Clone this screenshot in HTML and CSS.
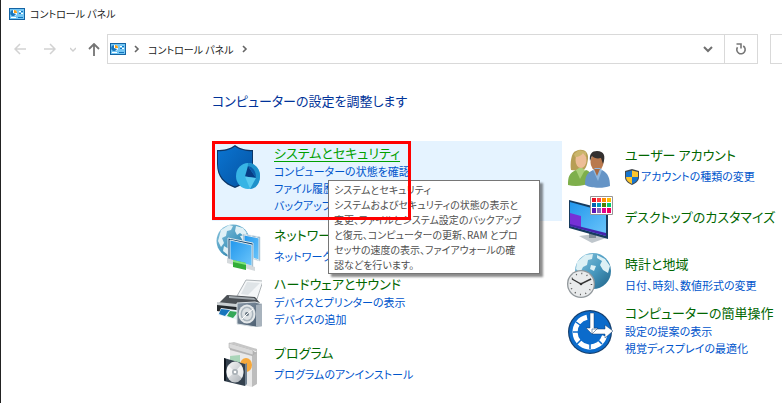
FILE: index.html
```html
<!DOCTYPE html>
<html lang="ja">
<head>
<meta charset="utf-8">
<title>コントロール パネル</title>
<link rel="stylesheet" href="styles.css">
</head>
<body>
<svg class="defs" aria-hidden="true">
  <defs>
    <linearGradient id="globe" x1="0" y1="0" x2="1" y2="1"><stop offset="0" stop-color="#8ec6de"/><stop offset=".5" stop-color="#4b9cc2"/><stop offset="1" stop-color="#1f6287"/></linearGradient>
    <linearGradient id="screen" x1="0" y1="0" x2="1" y2="1"><stop offset="0" stop-color="#2196ec"/><stop offset="1" stop-color="#6cc6fb"/></linearGradient>
    <linearGradient id="shield" x1="0" y1="0" x2="1" y2="1"><stop offset="0" stop-color="#0a74d1"/><stop offset="1" stop-color="#0553a2"/></linearGradient>
    <linearGradient id="silver" x1="0" y1="0" x2="1" y2="1"><stop offset="0" stop-color="#fafafa"/><stop offset="1" stop-color="#a9afb5"/></linearGradient>
    <linearGradient id="slate" x1="0" y1="0" x2="1" y2="1"><stop offset="0" stop-color="#8796a5"/><stop offset="1" stop-color="#46596c"/></linearGradient>
    <symbol id="panel" viewBox="0 0 16 12">
      <path fill="#1464a4" d="M0 0h16v12H0z"/><path fill="#74c7f5" d="M1 1h14v10H1z"/>
      <circle cx="5" cy="5" r="3" fill="#fff"/><path fill="#1676be" d="M4 5V2a3 3 0 1 0 3 4z"/><path fill="#f5a01b" d="M5 5V2a3 3 0 0 1 3 3z"/>
      <path fill="#fff" d="M10 3h4v1h-4zM10 5h4v1h-4zM2 9h5v1H2z"/><path fill="#1676be" d="M12 3h2v1h-2zM10 5h2v1h-2zM9 9h5v1H9z"/>
    </symbol>
    <symbol id="chevron" viewBox="0 0 6 8"><path d="M1 1l3 3-3 3" fill="none" stroke="#666" stroke-width="1.6"/></symbol>
  </defs>
</svg>
<div class="window">
  <header class="titlebar">
    <svg class="panel-icon"><use href="#panel"/></svg>
    <span>コントロール パネル</span>
  </header>
  <nav class="toolbar">
    <button class="nav back" aria-label="戻る"><svg width="12" height="12" viewBox="0 0 12 12"><path d="M12 6H1M6 1L1 6l5 5" fill="none" stroke="#d2d2d2" stroke-width="1.5"/></svg></button>
    <button class="nav forward" aria-label="進む"><svg width="12" height="12" viewBox="0 0 12 12"><path d="M0 6h11M6 1l5 5-5 5" fill="none" stroke="#d2d2d2" stroke-width="1.5"/></svg></button>
    <button class="nav recent" aria-label="最近表示した場所"><svg width="6" height="5" viewBox="0 0 6 5"><path d="M0 1l3 3 3-3" fill="none" stroke="#cfcfcf" stroke-width="1.4"/></svg></button>
    <button class="nav up" aria-label="上へ"><svg width="12" height="13" viewBox="0 0 12 13"><path d="M6 13V1M1 6l5-5 5 5" fill="none" stroke="#747474" stroke-width="1.8"/></svg></button>
    <div class="address">
      <svg class="panel-icon"><use href="#panel"/></svg>
      <svg class="chevron"><use href="#chevron"/></svg>
      <a href="#">コントロール パネル</a>
      <svg class="chevron"><use href="#chevron"/></svg>
      <button class="history" aria-label="履歴"><svg width="10" height="7" viewBox="0 0 10 7"><path d="M1 1l4 4 4-4" fill="none" stroke="#707070" stroke-width="2"/></svg></button>
      <button class="refresh" aria-label="最新の情報に更新"><svg width="12" height="12" viewBox="0 0 12 12"><path d="M8.200 3A4.200 4.200 0 1 1 2.500 4.200M1.500 1H6v4.500" fill="none" stroke="#777" stroke-width="1.6"/></svg></button>
    </div>
    <input class="search" type="text" aria-label="検索">
  </nav>
  <main>
    <h1>コンピューターの設定を調整します</h1>
    <div class="columns">
      <div class="column left">
        <section class="item active">
          <svg class="icon" viewBox="0 0 46 48">
            <path d="M19 0c5 4 11 5 18 5v14c0 13-7 20-18 24C8 39 1 32 1 19V5c7 0 13-1 18-5z" fill="#0b3566"/>
            <path d="M19 1.500c5 3.500 10 4.500 17 4.800V19c0 12-7 18.500-17 22.500C9 38 2 31 2 19V6.300c7 0 12-1.300 17-4.800z" fill="url(#shield)"/>
            <ellipse cx="32" cy="31" rx="12" ry="13" fill="#37b4e5"/>
            <path d="M32 18c7 0 12 6 12 13s-4 13-10 13l-3-10z" fill="#1e91cb"/>
            <path d="M32 21l8 12-11-1.500z" fill="#073c84"/><path d="M32 21c5 1 8 5 8 12z" fill="#0b5aa9"/>
            <path d="M29 31.500L40 33l-6 11z" fill="#58c9ef"/>
          </svg>
          <div class="text">
            <h2><a href="#">システムとセキュリティ</a></h2>
            <a class="task" href="#">コンピューターの状態を確認</a>
            <a class="task" href="#">ファイル履歴</a>
            <a class="task" href="#">バックアップ</a>
          </div>
          <div class="tooltip" role="tooltip">システムとセキュリティ<br>システムおよびセキュリティの状態の表示と<br>変更、ファイルとシステム設定のバックアップ<br>と復元、コンピューターの更新、RAM とプロ<br>セッサの速度の表示、ファイアウォールの確<br>認などを行います。</div>
          <div class="marker"></div>
        </section>
        <section class="item spaced">
          <svg class="icon" viewBox="0 0 46 48">
            <circle cx="17" cy="18" r="16.500" fill="url(#globe)"/>
            <path d="M5 7l8-5 4 1-2 4-4 1-1 5-4 2 2 5-3 4-3-6zM20 3l7 2 4 5-3 3-4-3-3 2-2-4zM8 23l5 3-1 6-5-4zM24 13l5-1 3 5-5 1z" fill="#e0f1f7"/>
            <g stroke="#dce7ed" stroke-width="1"><path d="M27 11l17 3v24l-17-5z" fill="#17578c"/><path d="M28 12l15 3v22l-15-5z" fill="url(#screen)"/><path d="M12 15l25 5v26l-25-7z" fill="#174a74"/><path d="M14 17l22 5v21l-22-6z" fill="url(#screen)"/></g>
            <path d="M11 35l28 9v4l-28-8z" fill="#d5dadd"/><path d="M17 37l13 3v7l-13-3z" fill="#33ad38"/><path d="M17 37l13 3v2l-13-3z" fill="#81e47c"/>
          </svg>
          <div class="text">
            <h2><a href="#">ネットワーク</a></h2>
            <a class="task" href="#">ネットワークの</a>
          </div>
        </section>
        <section class="item">
          <svg class="icon" viewBox="0 0 46 48">
            <path d="M30 1l17 1-6 18-20-3z" fill="#f5f7f8" stroke="#aeb4b8"/><path d="M31 3l13 1-12 12-7-1z" fill="#dfe4e7"/>
            <path d="M11 16l28 2 5 6-15 5-28-3z" fill="#4b5055"/><path d="M13 17l25 2 2 2-27-2z" fill="#a4abb0"/><path d="M1 24l30 3v10L1 32z" fill="#252a2e"/><path d="M1 23l29 3v3L1 26z" fill="#c9ced1"/>
            <path d="M5 29l22 3-5 9-20-5z" fill="#eaf3fa"/><path d="M5 30l9 1-5 6-6-2z" fill="#1775bd"/><path d="M14 32l8 1-5 6-6-2z" fill="#35a85a"/>
            <path d="M21 24l18-1 7 2v22l-6 1-19-3z" fill="url(#slate)" stroke="#dae0e4"/><path d="M40 26l6-1v22l-6 1z" fill="#a8b3bd"/>
            <ellipse cx="31" cy="35" rx="8.500" ry="9.500" fill="#e4e8ea"/><ellipse cx="31" cy="35" rx="6.500" ry="7.500" fill="#a9b4bc"/><ellipse cx="31" cy="35" rx="5" ry="6" fill="#dce1e4"/><circle cx="31" cy="35" r="2" fill="#687783"/><path d="M31 35l6-5M31 35l-5 5" stroke="#fff"/>
          </svg>
          <div class="text">
            <h2><a href="#">ハードウェアとサウンド</a></h2>
            <a class="task" href="#">デバイスとプリンターの表示</a>
            <a class="task" href="#">デバイスの追加</a>
          </div>
        </section>
        <section class="item spaced">
          <svg class="icon" viewBox="0 0 46 48">
            <path d="M14 7l22 7v32l-22-5z" fill="#e9e9e9"/><path d="M36 14l5-4v33l-5 3z" fill="#bdbdbd"/>
            <path d="M13 2l23 7 5 3-5 3-22-6z" fill="#b5b5b5"/><path d="M13 2l24 7v5l-24-7z" fill="#dadada" stroke="#a7a7a7" stroke-width=".5"/><path d="M13 2l5-1 23 7v3l-4-2z" fill="#c6c6c6"/>
            <path d="M14 15l10-1v15l-10-3z" fill="#a9d5b8"/><ellipse cx="30" cy="24" rx="6" ry="7" fill="#f6a83b"/>
            <path d="M8 17l21 6v22L8 40z" fill="#34414e"/><path d="M8 17l2 1v22l-2-1z" fill="#111820"/><path d="M29 23l2-1v21l-2 2z" fill="#738291"/>
            <ellipse cx="19" cy="31" rx="8.500" ry="10.500" fill="url(#silver)"/><path d="M19 31l6-7c3 4 3 9 1 13zM19 31l-7 6c-2-4-2-9 0-13z" fill="#fff" opacity=".7"/><circle cx="19" cy="31" r="3" fill="#a9b0b6"/><circle cx="19" cy="31" r="1.300" fill="#fff"/>
          </svg>
          <div class="text">
            <h2><a href="#">プログラム</a></h2>
            <a class="task" href="#">プログラムのアンインストール</a>
          </div>
        </section>
      </div>
      <div class="column right">
        <section class="item spaced">
          <svg class="icon" viewBox="0 0 46 48">
            <path d="M4 27c-1-6 0-18 5-19 6-3 13 0 12 8-1 8-3 12-8 12z" fill="#b79e55"/><ellipse cx="14" cy="17" rx="5.500" ry="8" fill="#edbd97"/><path d="M8 14c4 0 7-2 8-4l3 4V9l-7-2-5 4z" fill="#cbb56b"/>
            <path d="M1 42c0-8 1-12 8-15l4 4 6-4c6 2 6 6 6 12-7 4-17 5-24 3z" fill="#7eaf4c"/><path d="M9 27l4 9 5-9-3-2h-3z" fill="#a9cf79"/>
            <ellipse cx="30" cy="19" rx="6.500" ry="9" fill="#b9794d"/><path d="M23 18c-1-7 2-10 7-10 7 0 9 5 6 13l-2-6c-4 1-7 0-9-2z" fill="#33302f"/>
            <path d="M18 42c0-9 2-12 8-15l4 4 5-4c6 3 8 8 8 16-7 3-20 2-25-1z" fill="#6594c6"/><path d="M26 27l5 11 4-11-2-2h-5z" fill="#90b8df"/><path d="M27 26h6l-3 7z" fill="#a86a43"/>
          </svg>
          <div class="text">
            <h2><a href="#">ユーザー アカウント</a></h2>
            <a class="task" href="#"><svg class="uac" viewBox="0 0 14 16"><path d="M7 0l7 2v6c0 4-3 6-7 8-4-2-7-4-7-8V2z" fill="#44494d"/><path d="M7 1.500V8H1V3z" fill="#1675ce"/><path d="M7 1.500V8h6V3z" fill="#fbc52d"/><path d="M1 8h6v7C3 13 1 11 1 8z" fill="#fbc52d"/><path d="M13 8H7v7c4-2 6-4 6-7z" fill="#1675ce"/></svg>アカウントの種類の変更</a>
          </div>
        </section>
        <section class="item">
          <svg class="icon" viewBox="0 0 46 48">
            <path d="M12 41l16-2 11 4-14 5z" fill="#bfc6cc"/><path d="M22 37h7v6h-7z" fill="#838f98"/>
            <path d="M2 5l39 10v29L2 33z" fill="#163b5e"/><path d="M3 7l36 10v24L3 31z" fill="url(#screen)"/><path d="M3 18l11 3v13L3 31z" fill="#7730d7"/><path d="M3 29l36 9v3L3 31z" fill="#4524ab"/>
            <path d="M23.500 1.500h22v18h-22z" fill="#fff" stroke="#969696"/>
            <path d="M25 3h4v4h-4z" fill="#e81123"/><path d="M30 3h4v4h-4z" fill="#ff4343"/><path d="M35 3h4v4h-4z" fill="#ff8c00"/><path d="M40 3h4v4h-4z" fill="#ffb900"/>
            <path d="M25 8h4v4h-4z" fill="#0063b1"/><path d="M30 8h4v4h-4z" fill="#0099bc"/><path d="M35 8h4v4h-4z" fill="#498205"/><path d="M40 8h4v4h-4z" fill="#00cc6a"/>
            <path d="M25 13h4v5h-4z" fill="#5b15b5"/><path d="M30 13h4v5h-4z" fill="#8764b8"/><path d="M35 13h4v5h-4z" fill="#e3008c"/><path d="M40 13h4v5h-4z" fill="#ea005e"/>
          </svg>
          <div class="text"><h2><a href="#">デスクトップのカスタマイズ</a></h2></div>
        </section>
        <section class="item spaced">
          <svg class="icon" viewBox="0 0 46 48">
            <circle cx="26" cy="19" r="18" fill="url(#globe)"/><path d="M10 10l8-7 8-1-1 5-4 1-1 5-4 2-3 6-4-4zM30 3l8 4 5 7-2 7-5-3-3-5 2-4-5-3zM24 13l5 1-2 5-4-2z" fill="#dcf0f5"/>
            <circle cx="14" cy="32" r="14" fill="#92989c"/><circle cx="14" cy="32" r="12.700" fill="#e9ebec"/><circle cx="14" cy="32" r="10.500" fill="none" stroke="#555" stroke-width="1.500" stroke-dasharray="1 4.500"/><path d="M5 27l9 5 10-5" fill="none" stroke="#343434" stroke-width="1.400"/><circle cx="14" cy="32" r="1.300" fill="#333"/>
          </svg>
          <div class="text">
            <h2><a href="#">時計と地域</a></h2>
            <a class="task" href="#">日付、時刻、数値形式の変更</a>
          </div>
        </section>
        <section class="item">
          <svg class="icon" viewBox="0 0 46 48">
            <circle cx="23" cy="24" r="22" fill="#153f6e"/><circle cx="23" cy="24" r="20.800" fill="#0b6bcb"/>
            <path d="M20 9.300A15 15 0 1 0 37.500 28" fill="none" stroke="#fff" stroke-width="5"/>
            <path d="M9 14l7 5M6 24h8M10 36l6-6M23 41v-8M35 36l-6-6" stroke="#0b6bcb" stroke-width="1.500"/>
            <path d="M23 5h4v15h4l-6 6-6-6h4zM25 21h13v-4l8 6-8 7v-4H25z" fill="#fff" stroke="#153f6e" stroke-width=".5"/>
          </svg>
          <div class="text">
            <h2><a href="#">コンピューターの簡単操作</a></h2>
            <a class="task" href="#">設定の提案の表示</a>
            <a class="task" href="#">視覚ディスプレイの最適化</a>
          </div>
        </section>
      </div>
    </div>
  </main>
</div>
</body>
</html>
```
FILE: styles.css
```css
* { box-sizing: border-box; }
body {
  margin: 0;
  overflow: hidden;
  background: #fff;
  color: #222;
  font-family: "Noto Sans CJK JP", sans-serif;
  font-size: 11px;
  font-weight: 400;
  font-feature-settings: "palt";
}
.defs { position: absolute; width: 0; height: 0; }
.window { min-height: 100vh; border-left: 1px solid #222; }
a { color: inherit; text-decoration: none; }
button { padding: 0; border: 0; background: none; display: grid; place-items: center; }
svg { flex: none; }
.panel-icon { width: 16px; height: 12px; }

.titlebar { display: flex; align-items: center; gap: 5px; height: 27px; padding-left: 8px; font-size: 10px; }

.toolbar { display: flex; align-items: center; height: 30px; margin-top: 7px; font-size: 10px; }
.nav { height: 30px; }
.back { width: 12px; margin-left: 13px; }
.forward { width: 12px; margin-left: 18px; }
.recent { width: 8px; margin-left: 13px; }
.up { width: 12px; margin-left: 11px; }
.address {
  display: flex;
  align-items: center;
  flex: 1;
  height: 30px;
  margin-left: 7px;
  padding-left: 2px;
  border: 1px solid #d9d9d9;
}
.chevron { width: 6px; height: 8px; margin: 0 8px; }
.history { width: 32px; height: 28px; margin-left: auto; }
.refresh { width: 33px; height: 28px; border-left: 1px solid #d9d9d9; }
.search {
  width: 12px;
  height: 30px;
  margin-left: 12px;
  padding: 0;
  border: 1px solid #d9d9d9;
  border-right: 0;
}

main { padding: 26px 0 0 211px; }
h1 { margin: 0 0 29px; color: #003399; font-size: 13px; font-weight: 400; line-height: 22px; }
.columns { display: grid; grid-template-columns: 351px 1fr; align-items: start; }
.column { display: grid; }
.left { grid-template-rows: 80px 52px 60px 64px; padding-right: 1px; }
.right { grid-template-rows: 52px 52px 62px 50px; }
.item {
  position: relative;
  display: flex;
  align-items: center;
  gap: 12px;
  padding-left: 4px;
  white-space: nowrap;
}
.icon { width: 46px; height: 48px; }
.text { padding-bottom: 4px; }
.item h2 { margin: 0; color: #006600; font-size: 13px; font-weight: 400; line-height: 20px; }
.spaced h2 { margin-bottom: 3px; }
.task { display: flex; align-items: center; color: #0055cc; line-height: 17px; }
.uac { width: 14px; height: 16px; margin-right: 2px; }

.active { align-items: flex-start; padding-top: 2px; background: #e5f3ff; }
.active .icon { margin-top: 2px; }
.active h2 { color: #00a000; }
.active h2 a { text-decoration: underline; text-underline-offset: 3px; }
.tooltip {
  position: absolute;
  z-index: 2;
  top: 39px;
  left: 116px;
  width: 212px;
  padding: 1px 5px;
  border: 1px solid #767676;
  background: #fff;
  box-shadow: 3px 3px 2px rgba(0, 0, 0, .45);
  color: #505050;
  font-size: 10px;
  line-height: 15px;
}
.marker {
  position: absolute;
  z-index: 3;
  top: 0;
  left: 0;
  width: 199px;
  height: 79px;
  border: 3px solid #ff0000;
}
```
